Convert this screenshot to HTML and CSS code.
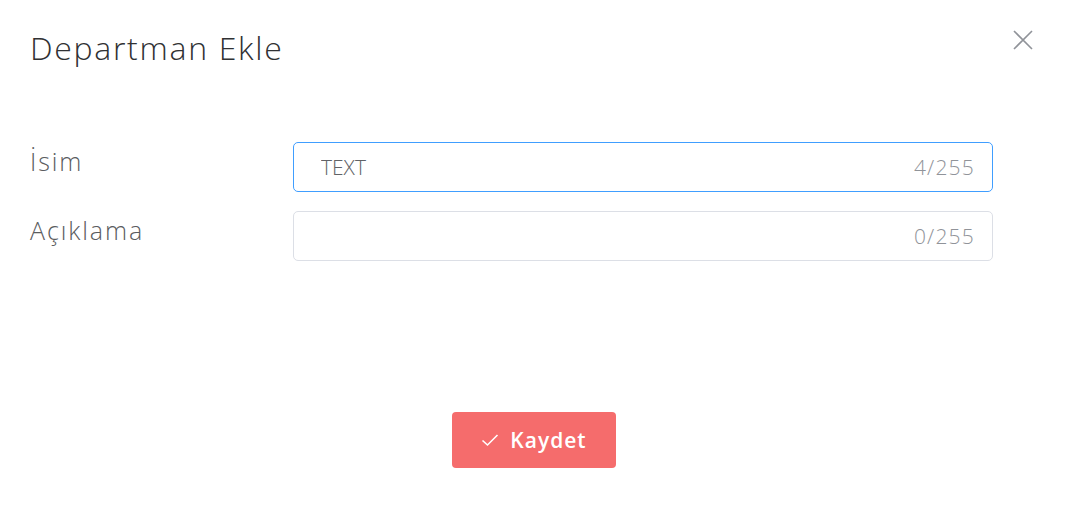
FILE: index.html
```html
<!DOCTYPE html>
<html lang="tr">
<head>
  <meta charset="UTF-8">
  <title>Departman Ekle</title>
  <link rel="stylesheet" href="styles.css">
</head>
<body>

  <!-- Dialog -->
  <div class="dialog">
    <div class="dialog-header">
      <h2 class="dialog-title">Departman Ekle</h2>
      <button class="dialog-close" aria-label="Kapat">
        <svg width="20" height="20" viewBox="0 0 20 20">
          <path d="M1 1 L19 19 M19 1 L1 19" stroke="#909399" stroke-width="1.6" fill="none"/>
        </svg>
      </button>
    </div>

    <form class="dialog-form">
      <div class="form-row">
        <label class="form-label" for="isim">İsim</label>
        <div class="input-wrap is-focus">
          <input id="isim" type="text" value="TEXT">
          <span class="input-count">4/255</span>
        </div>
      </div>
      <div class="form-row">
        <label class="form-label" for="aciklama">Açıklama</label>
        <div class="input-wrap">
          <input id="aciklama" type="text">
          <span class="input-count">0/255</span>
        </div>
      </div>
    </form>

    <div class="dialog-footer">
      <button class="btn-save" type="button">
        <svg width="18" height="18" viewBox="0 0 18 18">
          <path d="M1.5 9.5 L6.5 14 L16.5 4" stroke="#fff" stroke-width="1.6" fill="none"/>
        </svg>
        Kaydet
      </button>
    </div>
  </div>

</body>
</html>
```

FILE: styles.css
```css
* { margin: 0; padding: 0; box-sizing: border-box; }
body {
  font-family: 'Open Sans', sans-serif;
  background: #fff;
  width: 1072px;
  height: 512px;
  overflow: hidden;
}
.dialog {
  padding: 26px 30px 0 30px;
}
.dialog-header {
  display: flex;
  justify-content: space-between;
  align-items: flex-start;
}
.dialog-title {
  font-size: 32px;
  font-weight: 300;
  color: #303133;
  line-height: 44px;
  letter-spacing: 1.7px;
}
.dialog-close {
  background: none;
  border: none;
  margin: 4px 9px 0 0;
  cursor: pointer;
}
.dialog-form {
  margin-top: 72px;
  display: flex;
  flex-direction: column;
  gap: 19px;
}
.form-row {
  display: flex;
  align-items: flex-start;
}
.form-label {
  width: 263px;
  font-size: 25px;
  font-weight: 300;
  color: #5a5c60;
  line-height: 38px;
  letter-spacing: 1.9px;
}
.input-wrap {
  width: 700px;
  height: 50px;
  border: 1px solid #dcdfe6;
  border-radius: 5px;
  display: flex;
  align-items: center;
  padding: 0 17px 0 27px;
}
.input-wrap.is-focus { border-color: #409eff; }
.input-wrap input {
  flex: 1;
  border: none;
  outline: none;
  background: transparent;
  font-family: 'Open Sans', sans-serif;
  font-weight: 300;
  font-size: 21px;
  color: #606266;
}
.input-count {
  font-family: 'Open Sans', sans-serif;
  font-weight: 300;
  font-size: 21px;
  color: #909399;
  letter-spacing: 1.2px;
}
.dialog-footer {
  display: flex;
  justify-content: center;
  margin-top: 151px;
  padding-right: 4px;
}
.btn-save {
  display: flex;
  align-items: center;
  gap: 11px;
  width: 164px;
  height: 56px;
  justify-content: center;
  background: #f56c6c;
  border: none;
  border-radius: 4px;
  color: #fff;
  font-family: 'Open Sans', sans-serif;
  font-size: 21px;
  font-weight: 600;
  letter-spacing: 1px;
  cursor: pointer;
}
```
